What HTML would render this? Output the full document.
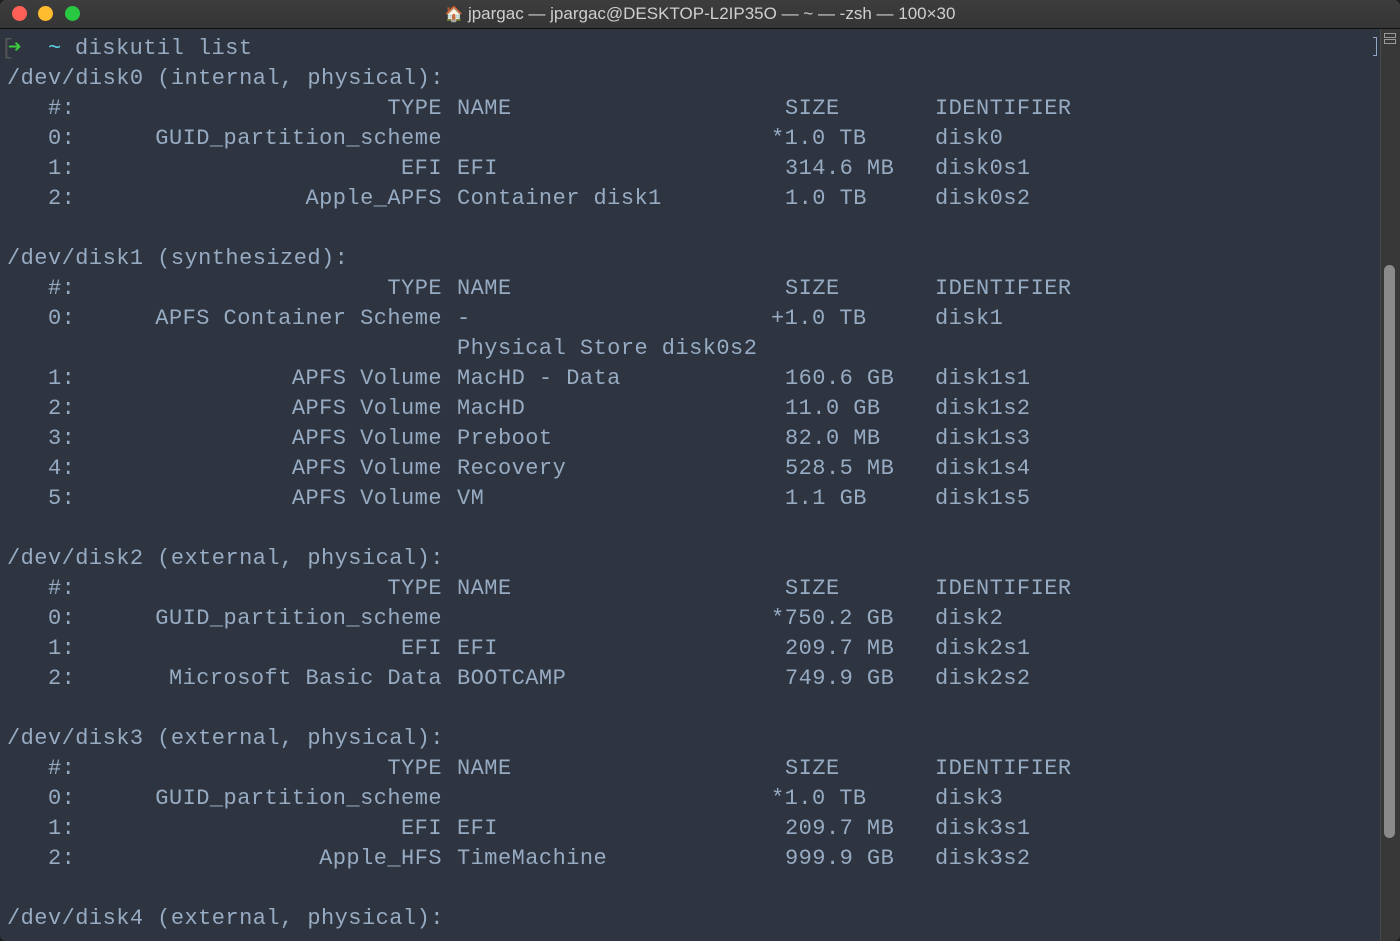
<!DOCTYPE html>
<html><head><meta charset="utf-8"><style>
html,body{margin:0;padding:0;background:#1e1e1e;width:1400px;height:941px;overflow:hidden}
#win{position:absolute;left:0;top:0;width:1400px;height:941px;background:#2e3440;border-radius:6px;overflow:hidden}
#tb{position:absolute;left:0;top:0;width:1400px;height:28px;background:linear-gradient(#3d3d3d,#353535);border-bottom:1px solid #111}
.dot{position:absolute;top:6px;width:15px;height:15px;border-radius:50%}
#title{position:absolute;left:0;right:0;top:4px;text-align:center;font:17px "Liberation Sans",sans-serif;color:#cfcfcf}
#sb{position:absolute;left:1380px;top:29px;width:20px;height:912px;background:#383838;border-left:1px solid #4a4a4a}
#thumb{position:absolute;left:1384px;top:265px;width:11px;height:573px;border-radius:6px;background:#8a8a8a}
#term{position:absolute;left:0;top:34px;width:1379px;font-family:"Liberation Mono",monospace;font-size:22px;letter-spacing:0.45px;color:#97abc3}
.r{position:relative;height:30px;line-height:30px;white-space:pre}
.r span{position:absolute;top:0}
.n{left:7px}
.t{right:937px;text-align:right}
.nm{left:457px}
.sz{left:785px}
.st{left:771px}
.id{left:935px}
.ib{position:absolute;left:1384px;width:12px;height:5px;border:1px solid #999;box-sizing:border-box}
</style></head><body><div id="win">
<div id="tb">
<div class="dot" style="left:12px;background:#fe5f57"></div>
<div class="dot" style="left:38px;background:#febc2e"></div>
<div class="dot" style="left:65px;background:#28c840"></div>
<div id="title"><span style="font-size:15px">🏠</span> jpargac — jpargac@DESKTOP-L2IP35O — ~ — -zsh — 100×30</div>
</div>
<div id="sb"></div><div id="thumb"></div>
<div class="ib" style="top:33px"></div><div class="ib" style="top:39px"></div>
<div style="position:absolute;left:1373px;top:37px;width:3px;height:17px;border:1px solid #8fa6c8;border-left:none"></div>
<div id="term">
<div class="r"><span style="left:1px;color:#555">[</span><span style="left:8px;color:#3ccb3c">➜</span><span style="left:48px;color:#5ed3e6">~</span><span style="left:75px">diskutil list</span></div>
<div class="r"><span class="n">/dev/disk0 (internal, physical):</span></div>
<div class="r"><span class="n">   #:</span><span class="t">TYPE</span><span class="nm">NAME</span><span class="sz">SIZE</span><span class="id">IDENTIFIER</span></div>
<div class="r"><span class="n">   0:</span><span class="t">GUID_partition_scheme</span><span class="st">*1.0 TB</span><span class="id">disk0</span></div>
<div class="r"><span class="n">   1:</span><span class="t">EFI</span><span class="nm">EFI</span><span class="sz">314.6 MB</span><span class="id">disk0s1</span></div>
<div class="r"><span class="n">   2:</span><span class="t">Apple_APFS</span><span class="nm">Container disk1</span><span class="sz">1.0 TB</span><span class="id">disk0s2</span></div>
<div class="r"></div>
<div class="r"><span class="n">/dev/disk1 (synthesized):</span></div>
<div class="r"><span class="n">   #:</span><span class="t">TYPE</span><span class="nm">NAME</span><span class="sz">SIZE</span><span class="id">IDENTIFIER</span></div>
<div class="r"><span class="n">   0:</span><span class="t">APFS Container Scheme</span><span class="nm">-</span><span class="st">+1.0 TB</span><span class="id">disk1</span></div>
<div class="r"><span class="nm">Physical Store disk0s2</span></div>
<div class="r"><span class="n">   1:</span><span class="t">APFS Volume</span><span class="nm">MacHD - Data</span><span class="sz">160.6 GB</span><span class="id">disk1s1</span></div>
<div class="r"><span class="n">   2:</span><span class="t">APFS Volume</span><span class="nm">MacHD</span><span class="sz">11.0 GB</span><span class="id">disk1s2</span></div>
<div class="r"><span class="n">   3:</span><span class="t">APFS Volume</span><span class="nm">Preboot</span><span class="sz">82.0 MB</span><span class="id">disk1s3</span></div>
<div class="r"><span class="n">   4:</span><span class="t">APFS Volume</span><span class="nm">Recovery</span><span class="sz">528.5 MB</span><span class="id">disk1s4</span></div>
<div class="r"><span class="n">   5:</span><span class="t">APFS Volume</span><span class="nm">VM</span><span class="sz">1.1 GB</span><span class="id">disk1s5</span></div>
<div class="r"></div>
<div class="r"><span class="n">/dev/disk2 (external, physical):</span></div>
<div class="r"><span class="n">   #:</span><span class="t">TYPE</span><span class="nm">NAME</span><span class="sz">SIZE</span><span class="id">IDENTIFIER</span></div>
<div class="r"><span class="n">   0:</span><span class="t">GUID_partition_scheme</span><span class="st">*750.2 GB</span><span class="id">disk2</span></div>
<div class="r"><span class="n">   1:</span><span class="t">EFI</span><span class="nm">EFI</span><span class="sz">209.7 MB</span><span class="id">disk2s1</span></div>
<div class="r"><span class="n">   2:</span><span class="t">Microsoft Basic Data</span><span class="nm">BOOTCAMP</span><span class="sz">749.9 GB</span><span class="id">disk2s2</span></div>
<div class="r"></div>
<div class="r"><span class="n">/dev/disk3 (external, physical):</span></div>
<div class="r"><span class="n">   #:</span><span class="t">TYPE</span><span class="nm">NAME</span><span class="sz">SIZE</span><span class="id">IDENTIFIER</span></div>
<div class="r"><span class="n">   0:</span><span class="t">GUID_partition_scheme</span><span class="st">*1.0 TB</span><span class="id">disk3</span></div>
<div class="r"><span class="n">   1:</span><span class="t">EFI</span><span class="nm">EFI</span><span class="sz">209.7 MB</span><span class="id">disk3s1</span></div>
<div class="r"><span class="n">   2:</span><span class="t">Apple_HFS</span><span class="nm">TimeMachine</span><span class="sz">999.9 GB</span><span class="id">disk3s2</span></div>
<div class="r"></div>
<div class="r"><span class="n">/dev/disk4 (external, physical):</span></div>
</div>
</div></body></html>
